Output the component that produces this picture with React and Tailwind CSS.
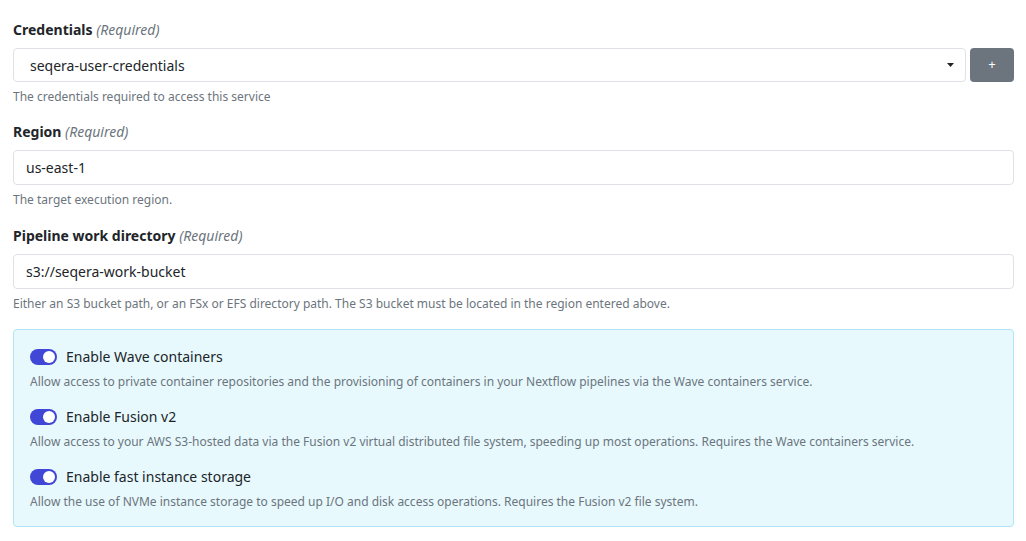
import React from 'react';

const font = { fontFamily: '"Segoe UI", "Noto Sans", "Open Sans", sans-serif' };

function Label({ children }) {
  return (
    <div className="text-[14px] leading-[20px] text-[#212529] mb-[8px]">
      <span className="font-bold">{children}</span>{' '}
      <span className="italic text-[#6c757d]">(Required)</span>
    </div>
  );
}

function Help({ children }) {
  return <div className="text-[12px] leading-[16px] text-[#6c757d] mt-[7px]">{children}</div>;
}

function Toggle() {
  return (
    <div className="w-[27px] h-[16px] rounded-full bg-[#4046d6] flex items-center justify-end pr-[2px] shrink-0">
      <div className="w-[12px] h-[12px] rounded-full bg-white" />
    </div>
  );
}

function Switch({ title, desc }) {
  return (
    <div className="flex flex-col">
      <div className="flex items-center gap-[9px]">
        <Toggle />
        <span className="text-[14px] leading-[20px] text-[#212529]">{title}</span>
      </div>
      <div className="text-[12px] leading-[16px] text-[#6c757d] mt-[7px]">{desc}</div>
    </div>
  );
}

export default function App() {
  return (
    <div className="w-[1026px] h-[541px] bg-white pl-[13px] pr-[12px] pt-[20px] overflow-hidden" style={font}>
      <Label>Credentials</Label>
      <div className="flex gap-[4px]">
        <div className="flex-1 h-[34px] border border-[#dee2e6] rounded-[4px] flex items-center justify-between pl-[16px] pr-[11px] text-[14px] text-[#212529]">
          <span>seqera-user-credentials</span>
          <svg width="7" height="4" viewBox="0 0 7 4"><path d="M0 0h7L3.5 4z" fill="#212529" /></svg>
        </div>
        <button className="w-[44px] h-[34px] rounded-[4px] bg-[#6c757d] text-white text-[13px] flex items-center justify-center">+</button>
      </div>
      <Help>The credentials required to access this service</Help>

      <div className="mt-[17px]">
        <Label>Region</Label>
        <div className="h-[35px] border border-[#dee2e6] rounded-[4px] flex items-center pl-[12px] text-[14px] text-[#212529]">us-east-1</div>
        <Help>The target execution region.</Help>
      </div>

      <div className="mt-[18px]">
        <Label>Pipeline work directory</Label>
        <div className="h-[35px] border border-[#dee2e6] rounded-[4px] flex items-center pl-[12px] text-[14px] text-[#212529]">s3://seqera-work-bucket</div>
        <Help>Either an S3 bucket path, or an FSx or EFS directory path. The S3 bucket must be located in the region entered above.</Help>
      </div>

      <div className="mt-[17px] h-[198px] bg-[#e7f9fd] border border-[#afe3f5] rounded-[4px] pl-[16px] pt-[17px] flex flex-col gap-[17px]">
        <Switch title="Enable Wave containers" desc="Allow access to private container repositories and the provisioning of containers in your Nextflow pipelines via the Wave containers service." />
        <Switch title="Enable Fusion v2" desc="Allow access to your AWS S3-hosted data via the Fusion v2 virtual distributed file system, speeding up most operations. Requires the Wave containers service." />
        <Switch title="Enable fast instance storage" desc="Allow the use of NVMe instance storage to speed up I/O and disk access operations. Requires the Fusion v2 file system." />
      </div>
    </div>
  );
}
